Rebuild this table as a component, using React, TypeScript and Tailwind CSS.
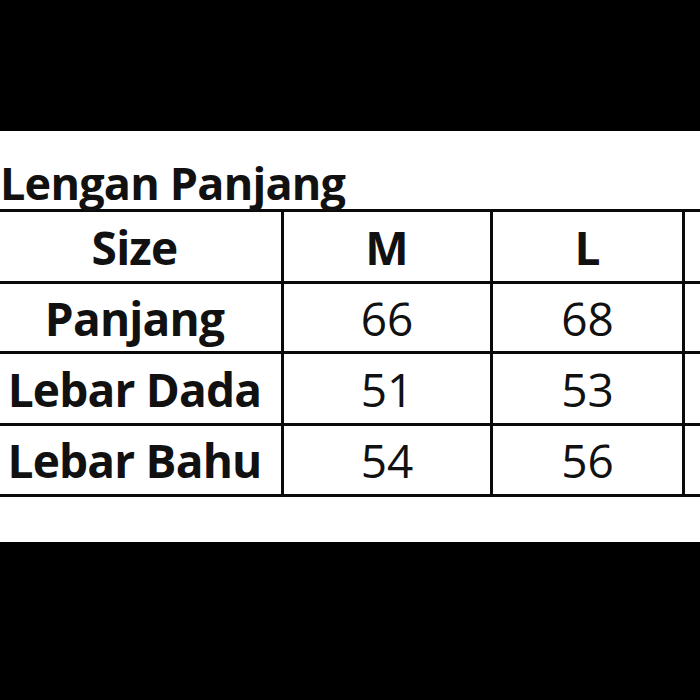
import * as React from "react";

const rows = [
  { label: "Panjang", m: "66", l: "68", h: "h-[70px]" },
  { label: "Lebar Dada", m: "51", l: "53", h: "h-[72px]" },
  { label: "Lebar Bahu", m: "54", l: "56", h: "h-[71px]" },
];

const font = { fontFamily: '"Open Sans", "Liberation Sans", sans-serif' };

export default function App() {
  return (
    <div className="w-[700px] h-[700px] bg-black flex flex-col overflow-hidden" style={font}>
      <div className="h-[131px] shrink-0" />
      <div className="h-[411px] shrink-0 bg-white overflow-hidden">
        <div className="h-[78px] flex items-end pb-[4px]">
          <h1 className="text-[45px] leading-none font-bold text-[#111] tracking-[-0.8px] whitespace-nowrap">
            Lengan Panjang
          </h1>
        </div>

        {/* size table, runs off the right edge */}
        <div className="ml-[-15px] w-[900px] border-t-[3px] border-l-[3px] border-[#0a0a0a] text-[#111] text-[46px] leading-none">
          <div className="flex h-[72px]">
            <div className="w-[296px] border-r-[3px] border-b-[3px] border-[#0a0a0a] flex items-center justify-center font-bold tracking-[-0.8px]">Size</div>
            <div className="w-[209px] border-r-[3px] border-b-[3px] border-[#0a0a0a] flex items-center justify-center font-bold">M</div>
            <div className="w-[192px] border-r-[3px] border-b-[3px] border-[#0a0a0a] flex items-center justify-center font-bold">L</div>
            <div className="w-[200px] border-r-[3px] border-b-[3px] border-[#0a0a0a]" />
          </div>
          {rows.map((r) => (
            <div key={r.label} className={`flex ${r.h}`}>
              <div className="w-[296px] border-r-[3px] border-b-[3px] border-[#0a0a0a] flex items-center justify-center font-bold tracking-[-0.8px] whitespace-nowrap">{r.label}</div>
              <div className="w-[209px] border-r-[3px] border-b-[3px] border-[#0a0a0a] flex items-center justify-center">{r.m}</div>
              <div className="w-[192px] border-r-[3px] border-b-[3px] border-[#0a0a0a] flex items-center justify-center">{r.l}</div>
              <div className="w-[200px] border-r-[3px] border-b-[3px] border-[#0a0a0a]" />
            </div>
          ))}
        </div>
      </div>
    </div>
  );
}
